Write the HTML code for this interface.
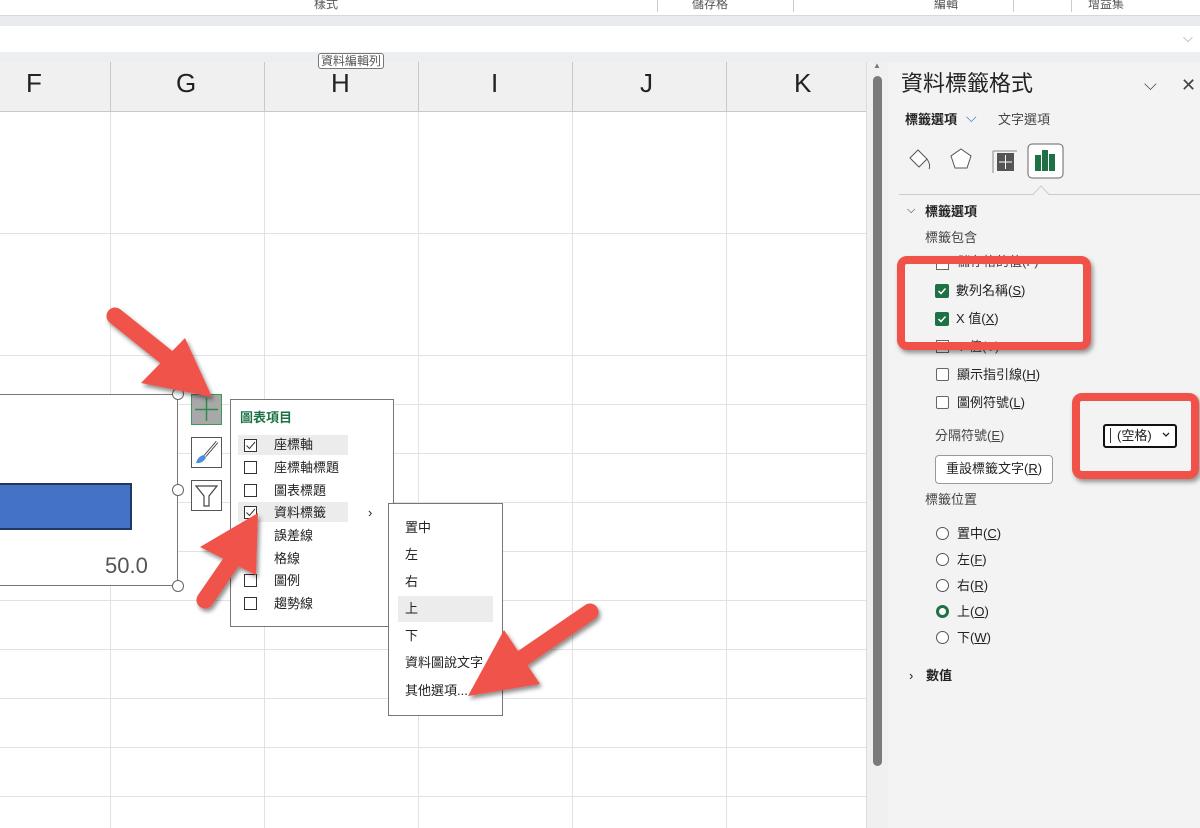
<!DOCTYPE html>
<html><head><meta charset="utf-8"><style>
*{margin:0;padding:0;box-sizing:border-box}
body{width:1200px;height:828px;overflow:hidden;position:relative;background:#fff;font-family:"Liberation Sans","Noto Sans CJK TC",sans-serif;color:#222}
.a{position:absolute}
.t{position:absolute;font-size:13px;white-space:nowrap;line-height:1}
.cb{position:absolute;width:13px;height:13px;border:1px solid #333;background:#fff}
.gcb{position:absolute;width:14px;height:14px;background:#1e7145;border-radius:2px}
.rad{position:absolute;width:13px;height:13px;border:1px solid #555;border-radius:50%;background:#fff}
u{text-decoration:underline}
</style></head><body>
<!-- ribbon -->
<div class="a" style="left:0;top:0;width:1200px;height:16px;background:#fff;border-bottom:1px solid #d8d8d8"></div>
<div class="t" style="left:314px;top:-2px;font-size:12px;color:#555">樣式</div>
<div class="t" style="left:692px;top:-2px;font-size:12px;color:#555">儲存格</div>
<div class="t" style="left:934px;top:-2px;font-size:12px;color:#555">編輯</div>
<div class="t" style="left:1088px;top:-2px;font-size:12px;color:#555">增益集</div>
<div class="a" style="left:657px;top:0;width:1px;height:12px;background:#ccc"></div>
<div class="a" style="left:793px;top:0;width:1px;height:12px;background:#ccc"></div>
<div class="a" style="left:1013px;top:0;width:1px;height:12px;background:#ccc"></div>
<div class="a" style="left:1071px;top:0;width:1px;height:12px;background:#ccc"></div>
<div class="a" style="left:0;top:16px;width:1200px;height:10px;background:#e9ebee"></div>
<div class="a" style="left:0;top:26px;width:1200px;height:26px;background:#fff"></div>
<div class="t" style="left:1183px;top:31px;color:#999">⌵</div>
<div class="a" style="left:0;top:52px;width:1200px;height:10px;background:#eceef0"></div>
<!-- column headers -->
<div class="a" style="left:0;top:62px;width:868px;height:50px;background:#f0f0f0;border-bottom:1px solid #c8c8c8"></div>
<div class="t" style="left:26px;top:70px;font-size:26px">F</div>
<div class="t" style="left:176px;top:70px;font-size:26px">G</div>
<div class="t" style="left:331px;top:70px;font-size:26px">H</div>
<div class="t" style="left:491px;top:70px;font-size:26px">I</div>
<div class="t" style="left:640px;top:70px;font-size:26px">J</div>
<div class="t" style="left:794px;top:70px;font-size:26px">K</div>
<svg class="a" style="left:0;top:62px" width="868" height="766">
<g stroke="#c8c8c8"><line x1="110.5" y1="0" x2="110.5" y2="50"/><line x1="264.5" y1="0" x2="264.5" y2="50"/><line x1="418.5" y1="0" x2="418.5" y2="50"/><line x1="572.5" y1="0" x2="572.5" y2="50"/><line x1="726.5" y1="0" x2="726.5" y2="50"/></g>
<g stroke="#e2e2e2"><line x1="110.5" y1="50" x2="110.5" y2="766"/><line x1="264.5" y1="50" x2="264.5" y2="766"/><line x1="418.5" y1="50" x2="418.5" y2="766"/><line x1="572.5" y1="50" x2="572.5" y2="766"/><line x1="726.5" y1="50" x2="726.5" y2="766"/>
<line x1="0" y1="171.5" x2="868" y2="171.5"/><line x1="0" y1="293.5" x2="868" y2="293.5"/><line x1="0" y1="342.5" x2="868" y2="342.5"/><line x1="0" y1="391.5" x2="868" y2="391.5"/><line x1="0" y1="440.5" x2="868" y2="440.5"/><line x1="0" y1="489.5" x2="868" y2="489.5"/><line x1="0" y1="538.5" x2="868" y2="538.5"/><line x1="0" y1="587.5" x2="868" y2="587.5"/><line x1="0" y1="636.5" x2="868" y2="636.5"/><line x1="0" y1="685.5" x2="868" y2="685.5"/><line x1="0" y1="734.5" x2="868" y2="734.5"/></g>
</svg>
<div class="t" style="left:318px;top:53px;font-size:12px;background:#fff;border:1px solid #777;border-radius:3px;padding:1px 2px;color:#555">資料編輯列</div>
<!-- scrollbar -->
<div class="a" style="left:866px;top:62px;width:22px;height:766px;background:#f0f0f0;border-left:1px solid #ddd"></div>
<div class="a" style="left:873px;top:76px;width:9px;height:690px;background:#7a7a7a;border-radius:5px"></div>
<div class="t" style="left:873px;top:62px;font-size:8px;color:#777">▲</div>
<!-- chart -->
<div class="a" style="left:-2px;top:394px;width:180px;height:192px;border:1px solid #777;background:#fff"></div>
<div class="a" style="left:0;top:483px;width:132px;height:47px;background:#4472c4;border:2px solid #1f3864;border-left:none"></div>
<div class="t" style="left:105px;top:555px;font-size:22px;color:#555">50.0</div>
<div class="a" style="left:172px;top:388px;width:12px;height:12px;border:1.5px solid #666;border-radius:50%;background:#fff"></div>
<div class="a" style="left:172px;top:484px;width:12px;height:12px;border:1.5px solid #666;border-radius:50%;background:#fff"></div>
<div class="a" style="left:172px;top:580px;width:12px;height:12px;border:1.5px solid #666;border-radius:50%;background:#fff"></div>
<div class="a" style="left:191px;top:394px;width:31px;height:31px;background:#a8a8a8;border:1px solid #3a9a5a"></div>
<svg class="a" style="left:191px;top:394px" width="31" height="31"><path d="M15.5 4V27M4 15.5H27" stroke="#2e8b4e" stroke-width="1.5"/></svg>
<div class="a" style="left:191px;top:437px;width:31px;height:31px;border:1px solid #555;background:#fff"></div>
<svg class="a" style="left:191px;top:437px" width="31" height="31"><path d="M26 5L14 19" stroke="#444" stroke-width="3"/><path d="M26 5L14 19" stroke="#fff" stroke-width="1.2"/><path d="M13 18Q7 19 5 26Q11 27 15 21Z" fill="#4a90d9"/></svg>
<div class="a" style="left:191px;top:480px;width:31px;height:31px;border:1px solid #555;background:#fff"></div>
<svg class="a" style="left:191px;top:480px" width="31" height="31"><path d="M5 6H26L18 16V26H13V16Z" fill="none" stroke="#444" stroke-width="1.2"/></svg>
<!-- menu 1 -->
<div class="a" style="left:230px;top:399px;width:164px;height:228px;background:#fff;border:1px solid #777"></div>
<div class="t" style="left:240px;top:411px;color:#1e7145;font-weight:bold">圖表項目</div>
<div class="a" style="left:238px;top:435px;width:110px;height:20px;background:#ececec"></div>
<div class="a" style="left:238px;top:502px;width:110px;height:20px;background:#ececec"></div>
<div class="cb" style="left:244px;top:439px"></div><svg class="a" style="left:244px;top:439px" width="13" height="13"><path d="M2.5 6.5L5.5 9.5L11 3" stroke="#333" fill="none"/></svg><div class="t" style="left:274px;top:438px">座標軸</div>
<div class="cb" style="left:244px;top:461px"></div><div class="t" style="left:274px;top:461px">座標軸標題</div>
<div class="cb" style="left:244px;top:484px"></div><div class="t" style="left:274px;top:484px">圖表標題</div>
<div class="cb" style="left:244px;top:506px"></div><svg class="a" style="left:244px;top:506px" width="13" height="13"><path d="M2.5 6.5L5.5 9.5L11 3" stroke="#333" fill="none"/></svg><div class="t" style="left:274px;top:506px">資料標籤</div>
<div class="t" style="left:368px;top:506px">›</div>
<div class="t" style="left:274px;top:529px">誤差線</div>
<div class="t" style="left:274px;top:552px">格線</div>
<div class="cb" style="left:244px;top:574px"></div><div class="t" style="left:274px;top:574px">圖例</div>
<div class="cb" style="left:244px;top:597px"></div><div class="t" style="left:274px;top:597px">趨勢線</div>
<!-- menu 2 -->
<div class="a" style="left:388px;top:503px;width:115px;height:213px;background:#fff;border:1px solid #777"></div>
<div class="a" style="left:398px;top:596px;width:95px;height:26px;background:#ececec"></div>
<div class="t" style="left:405px;top:521px">置中</div>
<div class="t" style="left:405px;top:548px">左</div>
<div class="t" style="left:405px;top:575px">右</div>
<div class="t" style="left:405px;top:602px">上</div>
<div class="t" style="left:405px;top:629px">下</div>
<div class="t" style="left:405px;top:656px">資料圖說文字</div>
<div class="t" style="left:405px;top:684px">其他選項...</div>
<!-- panel -->
<div class="a" style="left:888px;top:62px;width:312px;height:766px;background:#f3f3f3"></div>
<div class="t" style="left:901px;top:73px;font-size:22px">資料標籤格式</div>
<div class="t" style="left:1144px;top:76px;font-size:17px;color:#444">⌵</div>
<div class="t" style="left:1181px;top:76px;font-size:18px;color:#444">✕</div>
<div class="t" style="left:905px;top:113px;font-weight:bold">標籤選項</div>
<div class="t" style="left:966px;top:110px;color:#2b7cd3;font-size:14px">⌵</div>
<div class="t" style="left:998px;top:113px;color:#444">文字選項</div>
<svg class="a" style="left:905px;top:143px" width="165" height="40">
<path d="M5 15L13 7L22 16L14 24Z" fill="#fff" stroke="#555"/><path d="M22 16Q26 22 24 26" stroke="#555" fill="none"/>
<path d="M56 6L66 13L62 25H50L46 13Z" fill="#fff" stroke="#555"/>
<rect x="92" y="10" width="17" height="18" fill="#555"/><path d="M100.5 12V26M94 19H107" stroke="#fff"/><path d="M88 8V30M88 8H112" stroke="#888"/>
<rect x="123" y="1" width="35" height="34" rx="4" fill="#fff" stroke="#666"/><rect x="130" y="12" width="6" height="16" fill="#1e7145"/><rect x="137" y="7" width="6" height="21" fill="#1e7145"/><rect x="144" y="11" width="6" height="17" fill="#1e7145"/>
</svg>
<svg class="a" style="left:899px;top:184px" width="301" height="12"><path d="M0 10.5H134L142 2L150 10.5H301" stroke="#ccc" fill="none"/></svg>
<div class="t" style="left:907px;top:205px;font-size:11px">⌵</div>
<div class="t" style="left:925px;top:205px;font-weight:bold">標籤選項</div>
<div class="t" style="left:925px;top:231px;color:#444">標籤包含</div>
<div class="cb" style="left:936px;top:257px;border-color:#666"></div>
<div class="t" style="left:957px;top:255px;color:#444">儲存格的值(F)</div>
<div class="gcb" style="left:935px;top:284px"></div><svg class="a" style="left:935px;top:284px" width="14" height="14"><path d="M3.5 7L6 9.5L10.5 4.5" stroke="#fff" stroke-width="1.5" fill="none"/></svg><div class="t" style="left:956px;top:284px">數列名稱(<u>S</u>)</div>
<div class="gcb" style="left:935px;top:312px"></div><svg class="a" style="left:935px;top:312px" width="14" height="14"><path d="M3.5 7L6 9.5L10.5 4.5" stroke="#fff" stroke-width="1.5" fill="none"/></svg><div class="t" style="left:956px;top:312px">X 值(<u>X</u>)</div>
<div class="cb" style="left:936px;top:340px;border-color:#666"></div><div class="t" style="left:957px;top:340px;color:#444">Y 值(Y)</div>
<div class="cb" style="left:936px;top:368px;border-color:#666;border-radius:2px"></div><div class="t" style="left:957px;top:368px">顯示指引線(<u>H</u>)</div>
<div class="cb" style="left:936px;top:396px;border-color:#666;border-radius:2px"></div><div class="t" style="left:957px;top:396px">圖例符號(<u>L</u>)</div>
<div class="t" style="left:935px;top:429px;color:#444">分隔符號(<u>E</u>)</div>
<div class="a" style="left:1103px;top:424px;width:74px;height:24px;border:2px solid #111;border-radius:3px;background:#fff"></div>
<div class="a" style="left:1110px;top:428px;width:1px;height:15px;background:#333"></div>
<div class="t" style="left:1117px;top:429px">(空格)</div><svg class="a" style="left:1162px;top:432px" width="8" height="6"><path d="M1 1L4 4L7 1" stroke="#222" fill="none" stroke-width="1.3"/></svg>
<div class="a" style="left:935px;top:455px;width:118px;height:29px;border:1px solid #999;border-radius:4px;background:#fff"></div>
<div class="t" style="left:946px;top:462px">重設標籤文字(<u>R</u>)</div>
<div class="t" style="left:925px;top:493px;color:#444">標籤位置</div>
<div class="rad" style="left:936px;top:527px"></div><div class="t" style="left:957px;top:527px">置中(<u>C</u>)</div>
<div class="rad" style="left:936px;top:553px"></div><div class="t" style="left:957px;top:553px">左(<u>F</u>)</div>
<div class="rad" style="left:936px;top:579px"></div><div class="t" style="left:957px;top:579px">右(<u>R</u>)</div>
<div class="rad" style="left:936px;top:605px;border:3.5px solid #1e7145"></div><div class="t" style="left:957px;top:605px">上(<u>O</u>)</div>
<div class="rad" style="left:936px;top:631px"></div><div class="t" style="left:957px;top:631px">下(<u>W</u>)</div>
<div class="t" style="left:909px;top:669px">›</div><div class="t" style="left:926px;top:669px;font-weight:bold">數值</div>
<!-- red highlight boxes -->
<div class="a" style="left:897px;top:256px;width:194px;height:94px;border:8px solid #f0524a;border-radius:10px;box-shadow:2px 3px 5px rgba(0,0,0,.4)"></div>
<div class="a" style="left:1072px;top:393px;width:127px;height:86px;border:8px solid #f0524a;border-radius:10px;box-shadow:2px 3px 5px rgba(0,0,0,.4)"></div>
<!-- arrows -->
<svg class="a" style="left:0;top:0" width="1200" height="828">
<defs><filter id="s"><feDropShadow dx="2" dy="3" stdDeviation="2" flood-opacity=".45"/></filter></defs>
<g fill="#f0524a" stroke="#f0524a" filter="url(#s)">
<line x1="115" y1="316" x2="175" y2="364" stroke-width="17" stroke-linecap="round"/>
<polygon points="212,397 141,383 185,338" stroke="none"/>
<line x1="205" y1="600" x2="236" y2="555" stroke-width="17" stroke-linecap="round"/>
<polygon points="258,513 256,575 200,547" stroke="none"/>
<line x1="590" y1="612" x2="520" y2="660" stroke-width="17" stroke-linecap="round"/>
<polygon points="468,696 504,630 540,684" stroke="none"/>
</g></svg>
</body></html>
